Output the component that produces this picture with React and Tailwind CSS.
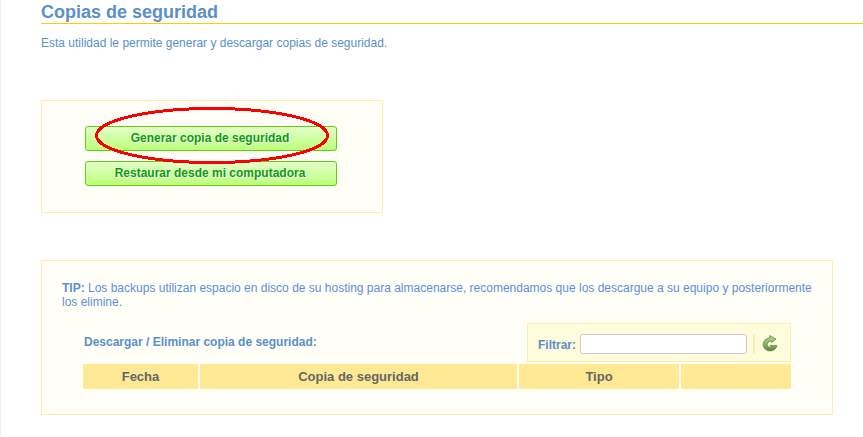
import { useState } from 'react';

const columns = [
  { id: 'date', label: 'Fecha', width: 'w-[115px]' },
  { id: 'backup', label: 'Copia de seguridad', width: 'w-auto' },
  { id: 'type', label: 'Tipo', width: 'w-[160px]' },
  { id: 'actions', label: '', width: 'w-[110px]' },
];

const ActionButton = ({ children }) => (
  <button
    type="button"
    className="h-[25px] w-full rounded-[3px] border border-[#66cc11] bg-linear-to-b from-[#e4ffc8] to-[#bbff77] pr-[2px] pb-[2px] text-xs font-bold text-[#119911] [text-shadow:1px_1px_1px_#ffffff]"
  >
    {children}
  </button>
);

const RefreshIcon = () => (
  <svg width="16" height="18" viewBox="0 0 16 18" aria-hidden="true">
    <defs>
      <linearGradient id="refresh" x1="0" y1="0" x2="0" y2="1">
        <stop offset="0" stopColor="#b9d596" />
        <stop offset="0.5" stopColor="#8fb56a" />
        <stop offset="1" stopColor="#5a8c35" />
      </linearGradient>
    </defs>
    <path
      d="M7.6 0.6 L14 4 L9.8 7.6 L9 6.2 C6.8 6.2 5.2 7.6 5.2 9.4 C5.2 12 8.2 12.8 9.6 11.6 L7.8 10.4 L14.8 10.4 C14.6 13.8 11.6 15.9 8 15.9 C4 15.9 1.2 13.2 1.2 9.6 C1.2 6 4 3.2 7.8 3 Z"
      fill="url(#refresh)"
      stroke="#5c8040"
      strokeWidth="0.7"
    />
  </svg>
);

const Actions = () => (
  <section className="relative mt-[50px] w-[342px] border border-[#ffeeaa] bg-[#fffff8] pt-[25px] pr-[45px] pb-[26px] pl-[43px]">
    <div className="flex flex-col gap-[10px]">
      <ActionButton>Generar copia de seguridad</ActionButton>
      <ActionButton>Restaurar desde mi computadora</ActionButton>
    </div>
    <svg
      className="pointer-events-none absolute top-[6px] left-[53px]"
      width="235"
      height="58"
      viewBox="0 0 235 58"
      shapeRendering="crispEdges"
      aria-hidden="true"
    >
      <ellipse cx="117" cy="28.5" rx="115.5" ry="27" fill="none" stroke="#ff0000" strokeWidth="3" />
    </svg>
  </section>
);

const Filter = () => {
  const [filter, setFilter] = useState('');

  return (
    <div className="flex h-[39px] w-[264px] items-center border border-[#ffeeaa] bg-[#fffbdd] pt-[3px] pl-[10px]">
      <label htmlFor="filter" className="pt-[2px] font-bold">
        Filtrar:
      </label>
      <input
        id="filter"
        type="text"
        value={filter}
        onChange={(e) => setFilter(e.target.value)}
        className="ml-1 h-5 w-[167px] rounded-[3px] border border-[#cccccc] bg-white px-1 outline-none"
      />
      <span className="ml-[6px] h-5 w-[2px] bg-[#ffeeaa]" />
      <button type="button" aria-label="Actualizar" className="ml-[7px]">
        <RefreshIcon />
      </button>
    </div>
  );
};

const Backups = () => (
  <section className="mt-[47px] mr-[30px] border border-[#ffeeaa] bg-[#fffff8] px-5 pt-5 pb-[23px]">
    <p className="text-[#5b8fdc]">
      <strong>TIP:</strong> Los backups utilizan espacio en disco de su hosting para almacenarse,
      recomendamos que los descargue a su equipo y posteriormente los elimine.
    </p>
    <div className="mt-[14px] mr-[21px] ml-[22px] flex items-center justify-between">
      <h2 className="pb-[2px] font-bold">Descargar / Eliminar copia de seguridad:</h2>
      <Filter />
    </div>
    <div className="mx-[19px]">
      <table className="w-full table-fixed border-separate border-spacing-[2px]">
        <thead>
          <tr>
            {columns.map((col) => (
              <th
                key={col.id}
                className={`h-[25px] bg-[#ffe994] p-0 text-[13px] font-bold text-[#666666] ${col.width}`}
              >
                {col.label}
              </th>
            ))}
          </tr>
        </thead>
      </table>
    </div>
  </section>
);

export default function App() {
  return (
    <main className="min-h-screen border-l border-[#eeeeee] bg-white pl-10 font-['Liberation_Sans',Arial,sans-serif] text-xs leading-[14px] text-[#5b8fc9]">
      <h1 className="border-b border-[#ffcc00] pt-[2px] pb-px text-lg leading-5 font-bold">
        Copias de seguridad
      </h1>
      <p className="mt-3">Esta utilidad le permite generar y descargar copias de seguridad.</p>
      <Actions />
      <Backups />
    </main>
  );
}
